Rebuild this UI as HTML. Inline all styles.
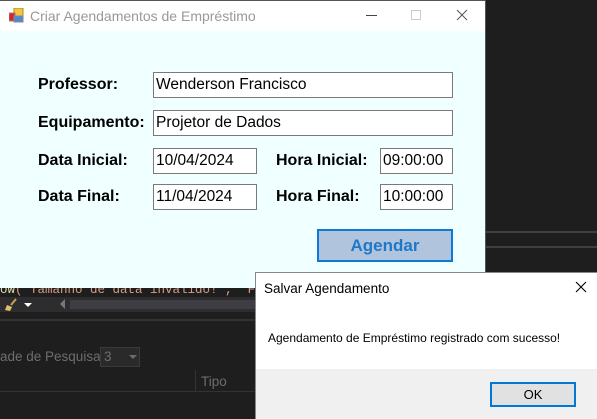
<!DOCTYPE html>
<html><head><meta charset="utf-8"><style>
*{margin:0;padding:0;box-sizing:border-box}
body{width:597px;height:419px;overflow:hidden;background:#1e1e1e;position:relative;font-family:"Liberation Sans",sans-serif}
.a{position:absolute;white-space:nowrap}
.lbl{position:absolute;font-weight:bold;font-size:16px;color:#000}
.tb{position:absolute;background:#fff;border:1px solid #7a7a7a;font-size:15.5px;padding:2px 0 0 2px;color:#000;line-height:19px}
.seg{font-family:"Liberation Sans",sans-serif}
</style></head><body>
<div class="a" style="left:485px;top:231px;width:112px;height:2px;background:#3f3f3f"></div>
<div class="a" style="left:485px;top:246px;width:112px;height:2px;background:#3f3f3f"></div>
<div class="a" style="left:0;top:286px;width:260px;height:11px;background:#1e1e1e;font-family:'Liberation Mono',monospace;font-size:12.5px;color:#d69d85;line-height:8px;overflow:hidden"><span style="color:#dcdcaa">ow</span>(<span>"Tamanho de data inválido!", "F</span></div>
<div class="a" style="left:0;top:297px;width:260px;height:15px;background:#2d2d30"></div>
<svg class="a" style="left:4px;top:298px" width="14" height="14"><path d="M12 1L7 7" stroke="#c8a050" stroke-width="2"/><path d="M3 7L8 9L6 13L1 12Z" fill="#e0c070"/></svg>
<div class="a" style="left:24px;top:303px;width:0;height:0;border-left:4px solid transparent;border-right:4px solid transparent;border-top:4px solid #fff"></div>
<div class="a" style="left:60px;top:299px;width:0;height:0;border-top:5px solid transparent;border-bottom:5px solid transparent;border-right:5px solid #777"></div>
<div class="a" style="left:70px;top:300px;width:190px;height:9px;background:#3e3e42"></div>
<div class="a" style="left:0;top:319px;width:260px;height:2px;background:#333"></div>
<div class="a" style="left:0;top:349px;font-size:13.5px;color:#6d6d6d">ade de Pesquisa:</div>
<div class="a" style="left:100px;top:347px;width:40px;height:20px;border:1px solid #3a3a3a;background:#2a2a2a;color:#6d6d6d;font-size:13.5px;padding:1px 0 0 3px">3</div>
<div class="a" style="left:129px;top:355px;border-left:4px solid transparent;border-right:4px solid transparent;border-top:4px solid #6d6d6d"></div>
<div class="a" style="left:195px;top:370px;width:1px;height:22px;background:#333"></div>
<div class="a" style="left:201px;top:374px;font-size:13.5px;color:#6d6d6d">Tipo</div>
<div class="a" style="left:0;top:391px;width:260px;height:1px;background:#333"></div>

<div class="a" style="left:0;top:0;width:486px;height:288px;background:#f0ffff;border-right:1px solid #555"></div>
<div class="a" style="left:0;top:0;width:485px;height:31px;background:#fff"></div>
<div class="a" style="left:0;top:0;width:486px;height:1px;background:#555"></div>
<svg class="a" style="left:9px;top:8px" width="15" height="15"><rect x="5" y="0" width="9" height="8" fill="#f5c542" stroke="#b08a20"/><rect x="0" y="5" width="6" height="8" fill="#d22" stroke="#888"/><rect x="5" y="8" width="9" height="6" fill="#4a8ad8" stroke="#888"/></svg>
<div class="a seg" style="left:30px;top:8px;font-size:14px;color:#999">Criar Agendamentos de Empréstimo</div>
<div class="a" style="left:366px;top:15px;width:11px;height:1px;background:#444"></div>
<div class="a" style="left:411px;top:10px;width:10px;height:10px;border:1px solid #ccc"></div>
<svg class="a" style="left:456px;top:9px" width="12" height="12"><path d="M1 1L11 11M11 1L1 11" stroke="#555" stroke-width="1"/></svg>

<div class="lbl" style="left:38px;top:76px">Professor:</div>
<div class="tb" style="left:153px;top:72px;width:300px;height:26px">Wenderson Francisco</div>
<div class="lbl" style="left:38px;top:114px">Equipamento:</div>
<div class="tb" style="left:153px;top:110px;width:300px;height:26px">Projetor de Dados</div>
<div class="lbl" style="left:38px;top:152px">Data Inicial:</div>
<div class="tb" style="left:153px;top:148px;width:104px;height:26px">10/04/2024</div>
<div class="lbl" style="left:276px;top:152px">Hora Inicial:</div>
<div class="tb" style="left:380px;top:148px;width:73px;height:26px">09:00:00</div>
<div class="lbl" style="left:38px;top:188px">Data Final:</div>
<div class="tb" style="left:153px;top:184px;width:104px;height:26px">11/04/2024</div>
<div class="lbl" style="left:276px;top:188px">Hora Final:</div>
<div class="tb" style="left:380px;top:184px;width:73px;height:26px">10:00:00</div>
<div class="a" style="left:317px;top:229px;width:136px;height:33px;background:#b0c4de;border:2px solid #0a7ad6;color:#1e78c8;font-weight:bold;font-size:17px;text-align:center;line-height:29px">Agendar</div>

<div class="a" style="left:255px;top:272px;width:342px;height:147px;background:#fff;border:1px solid #888;border-right:none;border-bottom:none"></div>
<div class="a seg" style="left:264px;top:281px;font-size:13.5px;color:#000">Salvar Agendamento</div>
<svg class="a" style="left:575px;top:281px" width="12" height="12"><path d="M1 1L11 11M11 1L1 11" stroke="#000" stroke-width="1.1"/></svg>
<div class="a seg" style="left:268px;top:331px;font-size:12px;color:#000">Agendamento de Empréstimo registrado com sucesso!</div>
<div class="a" style="left:256px;top:369px;width:341px;height:50px;background:#f0f0f0"></div>
<div class="a seg" style="left:490px;top:382px;width:86px;height:25px;background:#e1e1e1;border:2px solid #0078d7;font-size:13px;text-align:center;line-height:21px">OK</div>
</body></html>
